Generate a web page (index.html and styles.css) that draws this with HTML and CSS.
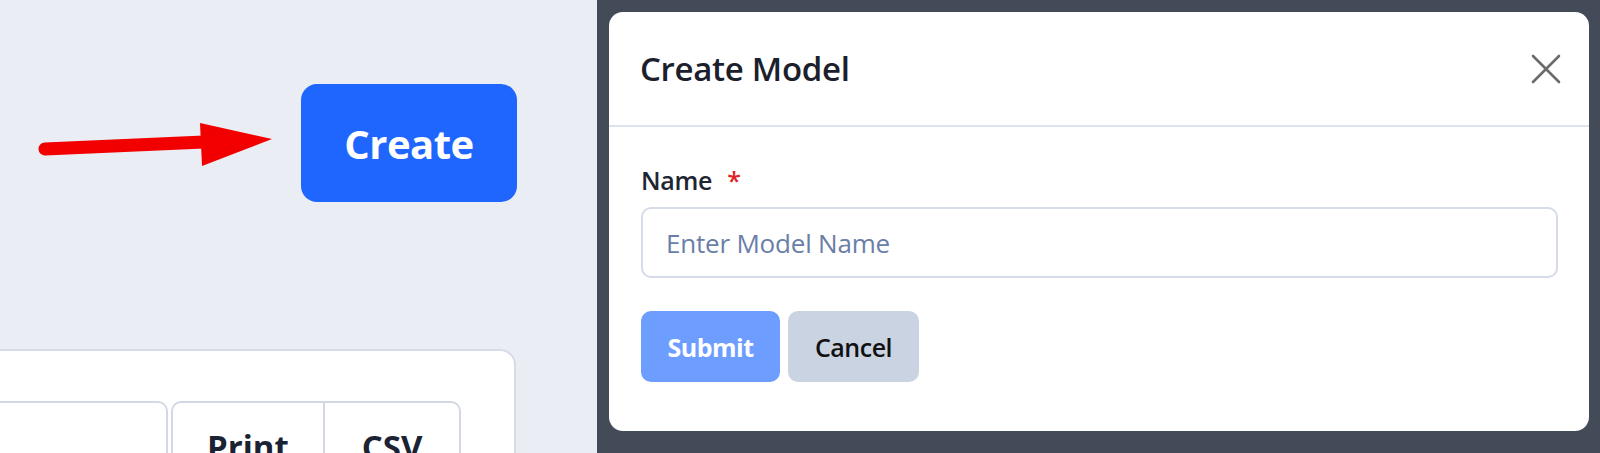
FILE: index.html
```html
<!DOCTYPE html>
<html lang="en">
<head>
<meta charset="utf-8">
<title>Create Model</title>
<link rel="stylesheet" href="styles.css">
</head>
<body>
<div class="page">
  <section class="left">
    <div class="action-row">
      <svg class="arrow" width="240" height="50" viewBox="0 0 240 50">
        <path d="M11 30 L170 23" stroke="#f20000" stroke-width="13" stroke-linecap="round" fill="none"/>
        <path d="M166 4 L238 20 L168 47 Z" fill="#f20000"/>
      </svg>
      <button class="btn-create">Create</button>
    </div>
    <div class="card">
      <div class="toolbar">
        <div class="search"></div>
        <div class="btn-group">
          <button class="tb-btn">Print</button>
          <button class="tb-btn last">CSV</button>
        </div>
      </div>
    </div>
  </section>
  <section class="overlay">
    <div class="modal">
      <div class="modal-header">
        <h2 class="modal-title">Create Model</h2>
        <svg class="close" width="30" height="30" viewBox="0 0 30 30">
          <path d="M2 2 L28 28 M28 2 L2 28" stroke="#6b6b6b" stroke-width="2.6" stroke-linecap="round" fill="none"/>
        </svg>
      </div>
      <div class="modal-body">
        <label class="field-label">Name <span class="req">*</span></label>
        <input class="field-input" type="text" placeholder="Enter Model Name">
        <div class="actions">
          <button class="btn-submit">Submit</button>
          <button class="btn-cancel">Cancel</button>
        </div>
      </div>
    </div>
  </section>
</div>
</body>
</html>
```
FILE: styles.css
```css
* { box-sizing: border-box; }
html, body { margin: 0; padding: 0; height: 100%; }
body {
  font-family: "Open Sans", "Noto Sans", sans-serif;
  background: #eaedf3;
  overflow: hidden;
}
.page {
  display: flex;
  width: 1600px;
  height: 453px;
}
.left {
  width: 597px;
  flex: none;
  background: #eaedf3;
  overflow: hidden;
  padding-top: 84px;
}
.action-row {
  display: flex;
  align-items: center;
  padding-left: 34px;
  gap: 27px;
}
.arrow { flex: none; margin-top: 2px; }
.btn-create {
  width: 216px;
  height: 118px;
  border: none;
  border-radius: 16px;
  background: #1f66ff;
  color: #fff;
  font-family: "Open Sans", sans-serif;
  font-weight: 700;
  font-size: 40px;
  letter-spacing: -0.5px;
  padding: 0;
}
.card {
  margin-top: 147px;
  margin-left: -20px;
  width: 536px;
  height: 200px;
  background: #fff;
  border: 2px solid #d6dce7;
  border-radius: 16px;
  padding-top: 50px;
}
.toolbar {
  display: flex;
  align-items: flex-start;
}
.search {
  width: 186px;
  height: 80px;
  border: 2px solid #d3d9e4;
  border-left: none;
  border-radius: 0 10px 0 0;
}
.btn-group {
  display: flex;
  margin-left: 3px;
}
.tb-btn {
  height: 80px;
  background: #fff;
  border: 2px solid #d3d9e4;
  border-radius: 10px 0 0 0;
  font-family: "Open Sans", sans-serif;
  font-weight: 700;
  font-size: 33px;
  line-height: 44px;
  color: #1a2233;
  padding: 22px 0 0;
  width: 154px;
  display: flex;
  justify-content: center;
  align-items: flex-start;
}
.tb-btn.last {
  width: 136px;
  border-left: none;
  border-radius: 0 10px 0 0;
}
.overlay {
  flex: 1;
  background: #434a58;
  padding: 12px 11px 0 12px;
}
.modal {
  background: #fff;
  border-radius: 14px;
  height: 419px;
  display: flex;
  flex-direction: column;
}
.modal-header {
  height: 115px;
  border-bottom: 2px solid #dce3ee;
  display: flex;
  align-items: center;
  justify-content: space-between;
  padding: 0 28px 0 31px;
}
.modal-title {
  margin: 0;
  font-size: 33px;
  font-weight: 600;
  color: #1b202c;
  letter-spacing: -0.3px;
}
.close { flex: none; }
.modal-body {
  padding: 36px 31px 0 32px;
  display: flex;
  flex-direction: column;
}
.field-label {
  font-size: 25px;
  line-height: 34px;
  font-weight: 600;
  color: #1e2533;
  letter-spacing: -0.3px;
}
.req {
  color: #e02424;
  margin-left: 9px;
}
.field-input {
  margin-top: 10px;
  height: 71px;
  border: 2px solid #d5dbe8;
  border-radius: 10px;
  padding: 0 23px;
  font-family: "Open Sans", sans-serif;
  font-size: 26px;
  color: #1e2533;
  outline: none;
}
.field-input::placeholder {
  color: #6a7ea8;
  letter-spacing: -0.2px;
}
.actions {
  display: flex;
  gap: 8px;
  margin-top: 33px;
}
.actions button {
  height: 71px;
  border: none;
  border-radius: 10px;
  font-family: "Open Sans", sans-serif;
  font-size: 25px;
  padding: 0;
  letter-spacing: -0.5px;
}
.btn-submit {
  width: 139px;
  background: #6d9dff;
  color: #fff;
  font-weight: 700;
}
.btn-cancel {
  width: 131px;
  background: #cad3e2;
  color: #111;
  font-weight: 600;
}
```
